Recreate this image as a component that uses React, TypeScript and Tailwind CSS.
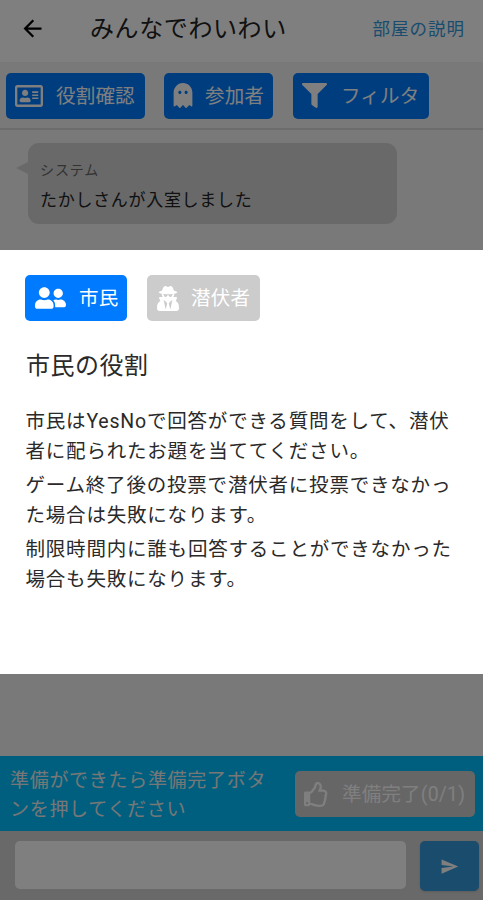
import type { ReactNode } from "react";
import {
  FaFilter,
  FaGhost,
  FaRegAddressCard,
  FaRegThumbsUp,
  FaUserFriends,
  FaUserSecret,
} from "react-icons/fa";
import { MdArrowBack, MdSend } from "react-icons/md";

function IconButton({ icon, label, className }: { icon: ReactNode; label: string; className: string }) {
  return (
    <button
      className={`flex h-[46px] shrink-0 items-center rounded-[5px] text-[19.5px] leading-none tracking-[0.2px] whitespace-nowrap text-white ${className}`}
    >
      {icon}
      <span className="pt-[2px]">{label}</span>
    </button>
  );
}

function Room() {
  return (
    <div className="flex h-[900px] flex-col bg-[#f2f2f2]">
      <header className="flex h-[62px] shrink-0 items-center bg-white pr-[18px] pl-[19px]">
        <MdArrowBack className="mt-[-5px] size-[27px] text-black" />
        <h1 className="-mt-1 ml-[44px] text-[24px] tracking-[0.6px] text-[#222]">みんなでわいわい</h1>
        <a className="-mt-1 ml-auto text-[17.5px] tracking-[1px] text-[#3498db]">部屋の説明</a>
      </header>
      <nav className="flex h-[68px] shrink-0 items-center border-b-2 border-[#d8d8d8] pt-px pl-[6px]">
        <IconButton
          icon={<FaRegAddressCard className="size-[28px]" />}
          label="役割確認"
          className="w-[139px] gap-[13px] bg-[#007bff] pl-[9px]"
        />
        <IconButton
          icon={<FaGhost className="h-[25px] w-[20px]" />}
          label="参加者"
          className="ml-[19px] w-[109px] gap-[12px] bg-[#007bff] pl-[9px]"
        />
        <IconButton
          icon={<FaFilter className="size-[25px]" />}
          label="フィルタ"
          className="ml-[20px] w-[136px] gap-[14px] bg-[#007bff] pl-[9px]"
        />
      </nav>
      <main className="flex flex-1 items-start pt-[13px] pl-[16px]">
        <div className="mt-[19px] h-0 w-0 border-y-[6px] border-r-[12px] border-y-transparent border-r-[#d3d3d3]" />
        <div className="h-[81px] w-[369px] rounded-[11px] bg-[#d3d3d3] pt-[14px] pl-[12px]">
          <p className="text-[14px] leading-[26px] tracking-[0.9px] text-[#666]">システム</p>
          <p className="mt-[2px] text-[17px] leading-[30px] tracking-[0.7px] text-[#222]">たかしさんが入室しました</p>
        </div>
      </main>
      <section className="flex h-[75px] shrink-0 items-start justify-between bg-[#00bfff] pr-[8px] pl-[10px]">
        <p className="mt-[10px] text-[19px] leading-[29px] tracking-[0.7px] text-[#eee]">
          準備ができたら準備完了ボタ
          <br />
          ンを押してください
        </p>
        <IconButton
          icon={<FaRegThumbsUp className="size-[25px]" />}
          label="準備完了(0/1)"
          className="mt-[15px] w-[180px] gap-[13px] bg-[#ccc] pl-[9px]"
        />
      </section>
      <footer className="flex h-[69px] shrink-0 items-start bg-[#d3d3d3] pt-[10px] pl-[15px]">
        <div className="h-[48px] w-[391px] rounded-[5px] bg-white" />
        <button className="ml-[14px] flex h-[50px] w-[59px] items-center justify-center rounded-[5px] bg-[#3498db] text-white shadow-sm">
          <MdSend className="size-[19px]" />
        </button>
      </footer>
    </div>
  );
}

function RoleDialog() {
  return (
    <div className="fixed inset-0 bg-black/50 pt-[250px]">
      <div className="h-[424px] bg-white pt-[25px] pr-[20px] pl-[25px]" role="dialog">
        <div className="flex gap-[20px]">
          <IconButton
            icon={<FaUserFriends className="h-[26px] w-[31px]" />}
            label="市民"
            className="w-[102px] gap-[13px] bg-[#007bff] pl-[10px]"
          />
          <IconButton
            icon={<FaUserSecret className="h-[25px] w-[22px]" />}
            label="潜伏者"
            className="w-[113px] gap-[12px] bg-[#ccc] pl-[10px]"
          />
        </div>
        <h2 className="mt-[27px] pl-px text-[24px] leading-[36px] tracking-[0.5px] text-[#2a2a2a]">市民の役割</h2>
        <div className="mt-[23px] flex flex-col gap-[5px] pl-[0.5px] text-[19.5px] leading-[29.5px] tracking-[0.8px] whitespace-nowrap text-[#2a2a2a]">
          <p>
            市民はYesNoで回答ができる質問をして、潜伏
            <br />
            者に配られたお題を当ててください。
          </p>
          <p>
            ゲーム終了後の投票で潜伏者に投票できなかっ
            <br />
            た場合は失敗になります。
          </p>
          <p>
            制限時間内に誰も回答することができなかった
            <br />
            場合も失敗になります。
          </p>
        </div>
      </div>
    </div>
  );
}

export default function App() {
  return (
    <div className="h-[900px] w-full overflow-hidden font-[Roboto,'Noto_Sans_CJK_JP',sans-serif]">
      <Room />
      <RoleDialog />
    </div>
  );
}
